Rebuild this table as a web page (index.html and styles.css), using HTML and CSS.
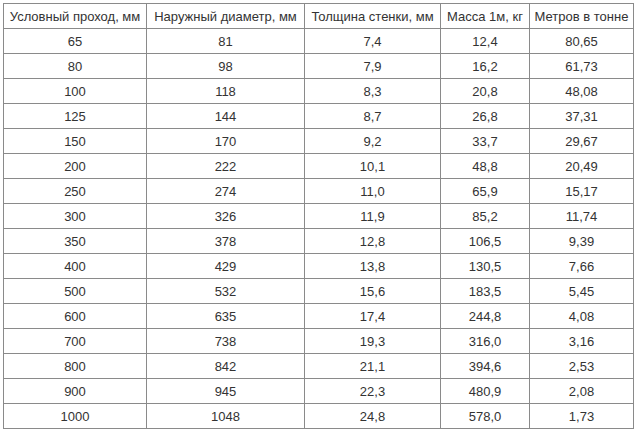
FILE: index.html
```html
<!DOCTYPE html>
<html lang="ru">
<head>
<meta charset="utf-8">
<link rel="stylesheet" href="styles.css">
</head>
<body>
<table class="pipes">
<colgroup>
<col class="c1"><col class="c2"><col class="c3"><col class="c4"><col class="c5">
</colgroup>
<thead>
<tr><th>Условный проход, мм</th><th>Наружный диаметр, мм</th><th>Толщина стенки, мм</th><th>Масса 1м, кг</th><th>Метров в тонне</th></tr>
</thead>
<tbody>
<tr><td>65</td><td>81</td><td>7,4</td><td>12,4</td><td>80,65</td></tr>
<tr><td>80</td><td>98</td><td>7,9</td><td>16,2</td><td>61,73</td></tr>
<tr><td>100</td><td>118</td><td>8,3</td><td>20,8</td><td>48,08</td></tr>
<tr><td>125</td><td>144</td><td>8,7</td><td>26,8</td><td>37,31</td></tr>
<tr><td>150</td><td>170</td><td>9,2</td><td>33,7</td><td>29,67</td></tr>
<tr><td>200</td><td>222</td><td>10,1</td><td>48,8</td><td>20,49</td></tr>
<tr><td>250</td><td>274</td><td>11,0</td><td>65,9</td><td>15,17</td></tr>
<tr><td>300</td><td>326</td><td>11,9</td><td>85,2</td><td>11,74</td></tr>
<tr><td>350</td><td>378</td><td>12,8</td><td>106,5</td><td>9,39</td></tr>
<tr><td>400</td><td>429</td><td>13,8</td><td>130,5</td><td>7,66</td></tr>
<tr><td>500</td><td>532</td><td>15,6</td><td>183,5</td><td>5,45</td></tr>
<tr><td>600</td><td>635</td><td>17,4</td><td>244,8</td><td>4,08</td></tr>
<tr><td>700</td><td>738</td><td>19,3</td><td>316,0</td><td>3,16</td></tr>
<tr><td>800</td><td>842</td><td>21,1</td><td>394,6</td><td>2,53</td></tr>
<tr><td>900</td><td>945</td><td>22,3</td><td>480,9</td><td>2,08</td></tr>
<tr><td>1000</td><td>1048</td><td>24,8</td><td>578,0</td><td>1,73</td></tr>
</tbody>
</table>
</body>
</html>
```
FILE: styles.css
```css
html, body {
  margin: 0;
  background: #fff;
}
body {
  padding: 3px;
  font-family: "Liberation Sans", Arial, sans-serif;
  font-size: 13px;
  color: #333;
}
.pipes {
  border-collapse: collapse;
  table-layout: fixed;
  width: 630px;
}
.c1 { width: 143px; }
.c2 { width: 158px; }
.c3 { width: 136px; }
.c4 { width: 89px; }
.c5 { width: 104px; }
.pipes th,
.pipes td {
  border: 1px solid #8a8a8a;
  height: 24px;
  padding: 0 4px;
  text-align: center;
  vertical-align: middle;
  font-weight: normal;
  white-space: nowrap;
  line-height: 15px;
}
```
